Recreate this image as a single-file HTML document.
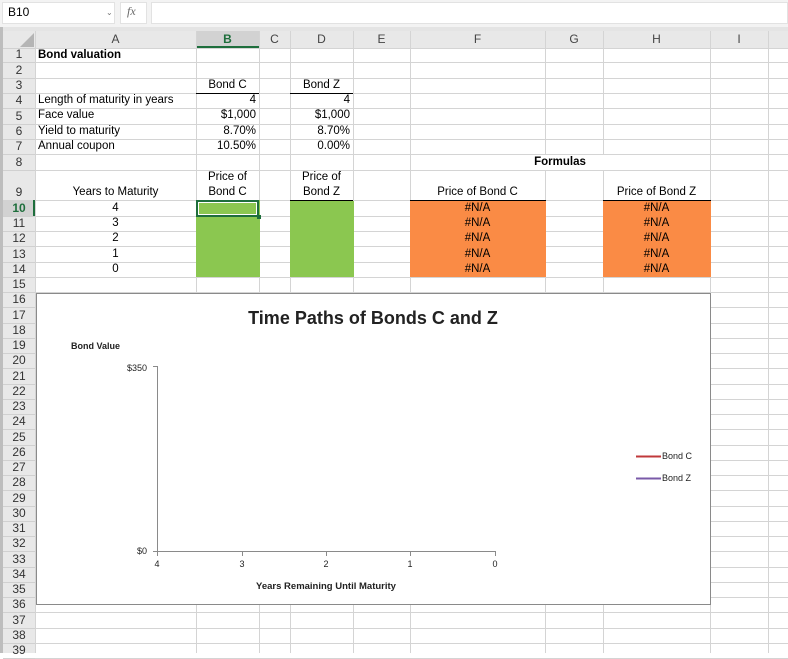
<!DOCTYPE html>
<html><head><meta charset="utf-8"><style>
*{margin:0;padding:0;box-sizing:border-box}
body{width:788px;height:653px;overflow:hidden;background:#fff;font-family:"Liberation Sans",Arial,sans-serif;font-size:11px;color:#000;position:relative}
.a{position:absolute}
.vl{position:absolute;top:31px;height:622px;width:1px;background:#d4d4d4}
.hl{position:absolute;left:35px;right:0;height:1px;background:#d4d4d4}
.rh{position:absolute;left:3px;width:32px;text-align:center;font-size:12px;color:#333;line-height:15px}
.ch{position:absolute;top:31px;height:17px;line-height:17px;text-align:center;font-size:12px;color:#444}
.t{position:absolute;font-size:11.5px;line-height:15px;white-space:nowrap}
.r{text-align:right}
.c{text-align:center}
</style></head><body>
<div class="a" style="left:0;top:0;width:788px;height:27px;background:#f3f3f3"></div>
<div class="a" style="left:2px;top:2px;width:113px;height:22px;background:#fff;border:1px solid #e2e2e2"></div>
<div class="t" style="left:8px;top:5px;font-size:12px">B10</div>
<div class="t" style="left:106px;top:5px;font-size:8px;color:#777">⌄</div>
<div class="a" style="left:120px;top:2px;width:27px;height:22px;background:#fff;border:1px solid #e2e2e2"></div>
<div class="t" style="left:127px;top:4px;font-family:'Liberation Serif',serif;font-style:italic;font-size:12px;color:#666">fx</div>
<div class="a" style="left:151px;top:2px;width:637px;height:22px;background:#fff;border:1px solid #e2e2e2"></div>
<div class="a" style="left:0;top:27px;width:788px;height:4px;background:#e4e4e4"></div>
<div class="a" style="left:0;top:31px;width:788px;height:17px;background:#e8e8e8"></div>
<div class="a" style="left:0;top:31px;width:35px;height:622px;background:#e8e8e8"></div>
<div class="a" style="left:0;top:27px;width:3px;height:626px;background:#bdbdbd"></div>
<div class="a" style="left:20px;top:33px;width:0;height:0;border-left:14px solid transparent;border-bottom:14px solid #b5b5b5"></div>
<div class="a" style="left:196px;top:31px;width:63px;height:17px;background:#d2d2d2;border-bottom:2px solid #1e6e3c"></div>
<div class="ch" style="left:35px;width:161px">A</div>
<div class="ch" style="left:196px;width:63px;color:#1e6e3c;font-weight:bold">B</div>
<div class="ch" style="left:259px;width:31px">C</div>
<div class="ch" style="left:290px;width:63px">D</div>
<div class="ch" style="left:353px;width:57px">E</div>
<div class="ch" style="left:410px;width:135px">F</div>
<div class="ch" style="left:545px;width:58px">G</div>
<div class="ch" style="left:603px;width:107px">H</div>
<div class="ch" style="left:710px;width:58px">I</div>
<div class="vl" style="left:35px"></div><div class="vl" style="left:196px"></div><div class="vl" style="left:259px"></div><div class="vl" style="left:290px"></div><div class="vl" style="left:353px"></div><div class="vl" style="left:410px"></div><div class="vl" style="left:545px"></div><div class="vl" style="left:603px"></div><div class="vl" style="left:710px"></div><div class="vl" style="left:768px"></div>
<div id="rows"></div>
<script>
var tops=[48,62,78,93,108,124,139,154,170,200,216,231,246,262,277];
for(var i=16;i<=40;i++)tops.push(292+(i-16)*15.26);
var h='';
for(var i=0;i<tops.length;i++){var y=Math.round(tops[i]);h+='<div class="hl" style="top:'+y+'px"></div><div class="a" style="left:3px;width:32px;height:1px;background:#d0d0d0;top:'+y+'px"></div>';
if(i<39){var nx=Math.round(tops[i+1]);h+='<div class="rh" style="top:'+(nx-15)+'px;'+(i==9?'font-weight:bold;color:#1e6e3c':'')+'">'+(i+1)+'</div>';}}
document.getElementById('rows').innerHTML=h;
</script>
<div class="a" style="left:3px;top:200px;width:32px;height:16px;background:#d2d2d2;border-right:2px solid #1e6e3c"></div>
<div class="rh" style="top:201px;font-weight:bold;color:#1e6e3c">10</div>
<div class="t" style="left:38px;top:48px;font-weight:bold">Bond valuation</div>
<div class="t c" style="left:196px;top:78px;width:63px">Bond C</div>
<div class="t c" style="left:290px;top:78px;width:63px">Bond Z</div>
<div class="a" style="left:196px;top:93px;width:63px;height:1px;background:#000"></div>
<div class="a" style="left:290px;top:93px;width:63px;height:1px;background:#000"></div>
<div class="t" style="left:38px;top:93px">Length of maturity in years</div>
<div class="t" style="left:38px;top:108px">Face value</div>
<div class="t" style="left:38px;top:124px">Yield to maturity</div>
<div class="t" style="left:38px;top:139px">Annual coupon</div>
<div class="t r" style="left:196px;top:93px;width:60px">4</div>
<div class="t r" style="left:196px;top:108px;width:60px">$1,000</div>
<div class="t r" style="left:196px;top:124px;width:60px">8.70%</div>
<div class="t r" style="left:196px;top:139px;width:60px">10.50%</div>
<div class="t r" style="left:290px;top:93px;width:60px">4</div>
<div class="t r" style="left:290px;top:108px;width:60px">$1,000</div>
<div class="t r" style="left:290px;top:124px;width:60px">8.70%</div>
<div class="t r" style="left:290px;top:139px;width:60px">0.00%</div>
<div class="a" style="left:411px;top:155px;width:299px;height:15px;background:#fff"></div>
<div class="t c" style="left:410px;top:155px;width:300px;font-weight:bold">Formulas</div>
<div class="t c" style="left:35px;top:185px;width:161px">Years to Maturity</div>
<div class="t c" style="left:196px;top:170px;width:63px">Price of<br>Bond C</div>
<div class="t c" style="left:290px;top:170px;width:63px">Price of<br>Bond Z</div>
<div class="t c" style="left:410px;top:185px;width:135px">Price of Bond C</div>
<div class="t c" style="left:603px;top:185px;width:107px">Price of Bond Z</div>
<div class="a" style="left:290px;top:200px;width:63px;height:1px;background:#000"></div>
<div class="a" style="left:410px;top:200px;width:136px;height:1px;background:#000"></div>
<div class="a" style="left:603px;top:200px;width:108px;height:1px;background:#000"></div>
<div class="a" style="left:196px;top:200px;width:64px;height:77px;background:#8bc750"></div>
<div class="a" style="left:290px;top:201px;width:64px;height:76px;background:#8bc750"></div>
<div class="a" style="left:410px;top:201px;width:136px;height:76px;background:#fa8b45"></div>
<div class="a" style="left:603px;top:201px;width:108px;height:76px;background:#fa8b45"></div>
<div class="a" style="left:196px;top:200px;width:63px;height:17px;border:2px solid #1e6e3c;box-shadow:inset 0 0 0 1px #fff"></div>
<div class="a" style="left:257px;top:215px;width:4px;height:4px;background:#1e6e3c"></div>
<div class="t c" style="left:35px;top:201px;width:161px;line-height:15.2px">4<br>3<br>2<br>1<br>0</div>
<div class="t c" style="left:410px;top:201px;width:135px;line-height:15.2px">#N/A<br>#N/A<br>#N/A<br>#N/A<br>#N/A</div>
<div class="t c" style="left:603px;top:201px;width:107px;line-height:15.2px">#N/A<br>#N/A<br>#N/A<br>#N/A<br>#N/A</div>
<div class="a" style="left:36px;top:293px;width:675px;height:312px;background:#fff;border:1px solid #8a8a8a"></div>
<svg class="a" style="left:36px;top:293px" width="675" height="312">
<g font-family="Liberation Sans,sans-serif" fill="#222">
<text x="337" y="31" font-size="18" font-weight="bold" text-anchor="middle">Time Paths of Bonds C and Z</text>
<text x="35" y="56" font-size="9" font-weight="bold">Bond Value</text>
<text x="111" y="78" font-size="9" text-anchor="end">$350</text>
<text x="111" y="261" font-size="9" text-anchor="end">$0</text>
<text x="121" y="274" font-size="9" text-anchor="middle">4</text>
<text x="206" y="274" font-size="9" text-anchor="middle">3</text>
<text x="290" y="274" font-size="9" text-anchor="middle">2</text>
<text x="374" y="274" font-size="9" text-anchor="middle">1</text>
<text x="459" y="274" font-size="9" text-anchor="middle">0</text>
<text x="290" y="296" font-size="9.5" font-weight="bold" text-anchor="middle">Years Remaining Until Maturity</text>
<text x="626" y="166" font-size="9">Bond C</text>
<text x="626" y="188" font-size="9">Bond Z</text>
</g>
<g stroke="#8a8a8a" fill="none" stroke-width="1">
<path d="M121.5 73V258.5H459.5M117 73.5H121M117 258.5H121M121.5 258v5M206.5 258v5M290.5 258v5M374.5 258v5M459.5 258v5"/>
</g>
<path d="M600 163.5H625" stroke="#c0393b" stroke-width="2"/>
<path d="M600 185.5H625" stroke="#7a5aa8" stroke-width="2"/>
</svg>
</body></html>
